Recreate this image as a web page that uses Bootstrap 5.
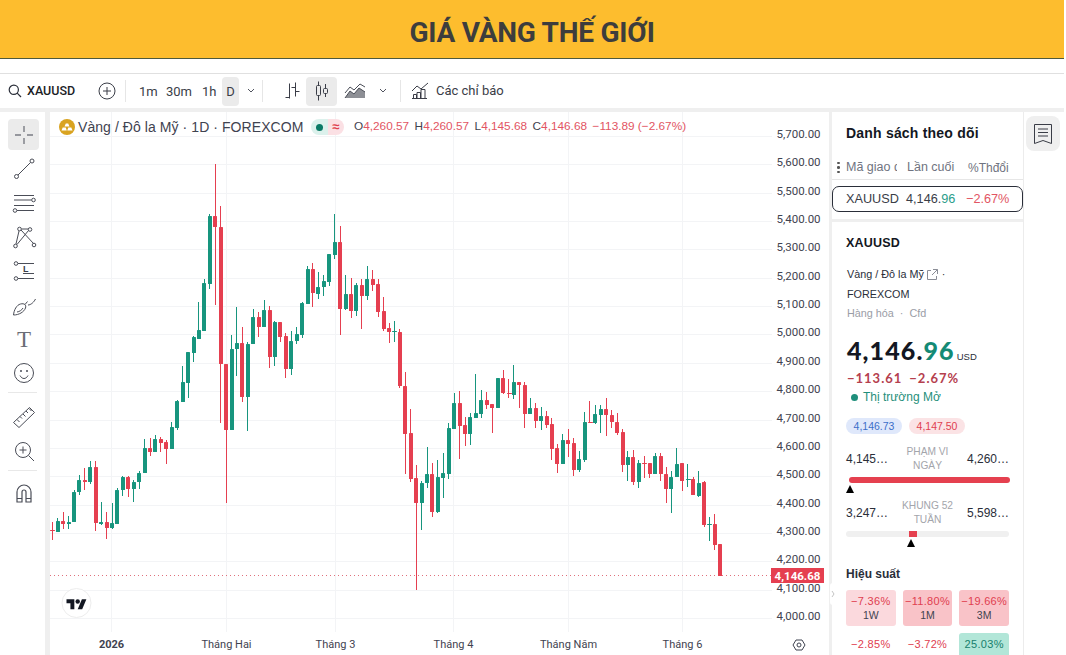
<!DOCTYPE html>
<html lang="vi">
<head>
    <meta charset="UTF-8">
    <meta name="viewport" content="width=device-width, initial-scale=1.0">
    <title>Giá vàng thế giới</title>
    <link href="https://cdn.jsdelivr.net/npm/bootstrap@5.3.0/dist/css/bootstrap.min.css" rel="stylesheet">
    <style>
        html, body { height: 655px; overflow: hidden; }
        body { background: #fff; font-family: "Liberation Sans", Arial, sans-serif; color: #2a2e39; }
        .page-wrap { width: 1064px; height: 655px; overflow: hidden; }

        .gold-head { height: 59px; background: #fdbd2e; border-bottom: 1px solid #4d5a3c; padding-top: 8px; }
        .gold-head h1 { font-family: Roboto, sans-serif; font-weight: 700; font-size: 28px; line-height: 50px; color: #3d3d3d; margin: 0; letter-spacing: -.25px; }

        .top-tools { margin-top: 14px; height: 35px; border-top: 1px solid #e0e0e0; font-family: Roboto, sans-serif; font-size: 13px; color: #3a3d47; }
        .top-tools svg { display: block; flex: none; }
        .symbol-name { font-weight: 500; color: #1c1e26; width: 48px; margin-left: 5px; font-size: 12.5px; white-space: nowrap; }
        .tool-sep { width: 1px; height: 22px; background: #e6e6e6; flex: none; }
        .range-btn { height: 29px; line-height: 29px; text-align: center; flex: none; border-radius: 4px; }
        .range-btn.on { background: #ebebeb; }

        .work-area { height: 547px; background: #efefef; padding-top: 4px; }
        .side-tools { width: 45px; background: #fff; padding: 7px 8px 0; flex: none; }
        .draw-btn { width: 31px; height: 31px; margin-bottom: 3px; border-radius: 4px; }
        .draw-btn.on { background: #ebebeb; }
        .draw-line { height: 1px; background: #e8e8e8; margin: 4px 0 8px; }

        .chart-box { width: 779px; margin-left: 5px; background: #fff; position: relative; flex: none; }
        .chart-box > svg { display: block; }
        .chart-legend { position: absolute; left: 9px; top: 7px; height: 16px; font-size: 14px; color: #3f4350; white-space: nowrap; }
        .legend-title { margin-left: 3px; width: 225px; letter-spacing: .07px; }
        .status-pill { width: 33px; height: 16px; margin-left: 8px; border-radius: 8px; overflow: hidden; }
        .status-pill span { width: 50%; height: 16px; }
        .pill-live { background: #dcf1ec; }
        .pill-live i { display: block; width: 7px; height: 7px; border-radius: 50%; background: #0b7a66; }
        .pill-delay { background: #fbe0e4; color: #e0404f; font-size: 13px; font-weight: 700; line-height: 15px; }
        .ohlc { margin-left: 10px; font-size: 11.8px; color: #e25563; }
        .ohlc b { font-weight: 400; color: #3f4350; }
        .ohlc span { margin-right: 5.5px; }

        .watch-side { width: 191px; margin-left: 3px; background: #fff; flex: none; }
        .watch-title { height: 42px; line-height: 42px; padding-left: 14px; font-size: 14px; font-weight: 700; color: #131722; letter-spacing: .2px; }
        .watch-cols { height: 26px; padding-top: 2px; border-bottom: 1px solid #e6e6e6; font-size: 12.5px; color: #6f7380; }
        .watch-dots { width: 14px; padding-left: 5px; flex: none; }
        .watch-dots i { display: block; width: 2.5px; height: 2.5px; border-radius: 50%; background: #555; margin: 2px 0; }
        .col-sym { width: 51px; overflow: hidden; white-space: nowrap; flex: none; }
        .col-last { width: 48px; margin-left: 10px; flex: none; white-space: nowrap; }
        .col-chg { margin-left: 13px; width: 40px; white-space: nowrap; flex: none; text-align: right; font-size: 12px; }
        .watch-row { margin-top: 6px; height: 26px; padding-top: 1px; border: 1px solid #2a2e39; border-radius: 7px; font-size: 12.7px; color: #3a3d47; padding-left: 13px; }
        .watch-row .col-sym, .watch-row .col-last { overflow: visible; }
        .watch-row .col-last { margin-left: 9px; }
        .watch-row .col-chg { margin-left: 12px; color: #e25563; font-size: 12.7px; }
        .txt-up { color: #2a9d8a; }
        .band-gap { height: 3px; background: #efefef; margin-top: 7px; }

        .detail-body { padding: 0 14px; }
        .detail-sym { margin-top: 11px; font-size: 12.5px; font-weight: 700; line-height: 20px; color: #131722; letter-spacing: .2px; }
        .detail-line { font-size: 10.8px; line-height: 20px; color: #2a2e39; padding-left: 1px; }
        .detail-line svg { margin: 0 4px 0 3px; vertical-align: -2px; }
        .detail-grey { font-size: 10.8px; line-height: 18px; color: #9a9da6; padding-left: 1px; }
        .big-price { margin-top: 10px; height: 36px; line-height: 36px; font-family: Lato, sans-serif; font-weight: 900; font-size: 25px; letter-spacing: 1.1px; color: #131722; white-space: nowrap; padding-left: 1px; overflow: hidden; }
        .big-price .cents { color: #148a75; }
        .big-price small { font-family: "Liberation Sans", sans-serif; font-weight: 400; font-size: 9.5px; letter-spacing: 0; margin-left: -5px; color: #2a2e39; }
        .big-change { margin-top: 1px; line-height: 18px; font-family: Lato, sans-serif; font-weight: 700; font-size: 13px; letter-spacing: 1px; color: #b5404e; padding-left: 1px; }
        .big-change span { margin-right: 7px; }
        .market-open { margin-top: 1px; line-height: 18px; font-size: 12px; color: #1f8f7b; padding-left: 5px; }
        .market-open i { display: inline-block; width: 7px; height: 7px; border-radius: 50%; background: #1f8f7b; margin-right: 5px; }
        .quote-row { margin-top: 12px; gap: 7px; }
        .quote-pill { height: 16px; line-height: 16px; border-radius: 8px; font-size: 10.5px; width: 56px; text-align: center; }
        .quote-blue { background: #dfe8fb; color: #3c6fc9; }
        .quote-red { background: #fbe3e5; color: #e0404f; }
        .range-head { font-size: 12px; line-height: 28px; height: 28px; color: #2a2e39; }
        .range-head.first { margin-top: 11px; }
        .range-num { width: 42px; flex: none; white-space: nowrap; }
        .range-name { flex: 1; padding: 0 8px; text-align: center; font-size: 10.2px; line-height: 14px; color: #a3a5ab; }
        .range-track { position: relative; height: 6px; border-radius: 3px; background: #f0f0f0; margin: 4px 0 16px; }
        .range-track.filled { background: #e5404f; margin-left: 3px; margin-right: -1px; }
        .range-mark { position: absolute; top: 8px; width: 0; height: 0; border-left: 4px solid transparent; border-right: 4px solid transparent; border-bottom: 8px solid #000; }
        .range-fill { position: absolute; top: 0; height: 6px; background: #e5404f; }
        .perf-title { margin-top: 28px; line-height: 18px; font-size: 12px; font-weight: 700; color: #2a2e39; }
        .perf-grid { margin-top: 7px; display: grid; grid-template-columns: repeat(3, 1fr); gap: 7px; }
        .perf-cell { height: 36px; border-radius: 3px; text-align: center; font-size: 11px; line-height: 14px; padding-top: 4px; color: #e0404f; letter-spacing: .3px; }
        .perf-cell small { display: block; font-size: 10.5px; color: #3f4350; letter-spacing: 0; }
        .perf-a { background: #fbd9dd; }
        .perf-b { background: #f9c3c8; }
        .perf-g { background: #b2e6d8; color: #16806c; }

        .book-strip { width: 41px; margin-left: 0; background: #fff; border-left: 1px solid #ececec; padding: 4px 0 0 2px; flex: none; }
        .book-btn { width: 34px; height: 35px; background: #efefef; border-radius: 8px; }

        .collapse-tab { position: absolute; left: 780px; top: 471px; width: 6px; height: 22px; background: #fff; border-radius: 3px; z-index: 3; color: #c4c4c4; }
    </style>
</head>
<body>
<div class="page-wrap">
    <!-- tieu de -->
    <div class="gold-head text-center"><h1>GIÁ VÀNG THẾ GIỚI</h1></div>

    <!-- thanh cong cu tren -->
    <div class="top-tools d-flex align-items-center">
        <svg class="ms-2" width="14" height="14" viewBox="0 0 14 14" fill="none" stroke="#2a2e39" stroke-width="1.2"><circle cx="5.8" cy="5.8" r="4.6"/><path d="M9.2 9.2L13 13"/></svg>
        <div class="symbol-name">XAUUSD</div>
        <svg style="margin-left:23px" width="18" height="18" viewBox="0 0 18 18" fill="none" stroke="#3a3d47" stroke-width="1"><circle cx="9" cy="9" r="8"/><path d="M9 5v8M5 9h8"/></svg>
        <div class="tool-sep" style="margin-left:9px"></div>
        <div class="range-btn" style="width:17px;margin-left:13px">1m</div>
        <div class="range-btn" style="width:25px;margin-left:10px">30m</div>
        <div class="range-btn" style="width:13px;margin-left:11px">1h</div>
        <div class="range-btn on" style="width:17px;margin-left:7px">D</div>
        <svg style="margin-left:8px" width="8" height="6" viewBox="0 0 8 6" fill="none" stroke="#50535e"><path d="M1 1l3 3 3-3"/></svg>
        <div class="tool-sep" style="margin-left:7px"></div>
        <svg style="margin-left:21px" width="16" height="18" viewBox="0 0 16 18" fill="none" stroke="#3a3d47"><path d="M5.5 1.5v15M1.5 15.5h4M11.5 0.5v14M7.5 5.5h4M11.5 9.5h4"/></svg>
        <div class="range-btn on d-flex align-items-center justify-content-center" style="width:31px;margin-left:6px">
            <svg width="16" height="20" viewBox="0 0 16 20" fill="none" stroke="#3a3d47"><path d="M4.5 0.5v3.500M4.5 15v4.500M11.5 3v4M11.5 13v3"/><rect x="2.5" y="4.5" width="4" height="10" rx="1"/><rect x="9.5" y="7.5" width="4" height="5" rx="1"/></svg>
        </div>
        <svg style="margin-left:7px" width="22" height="16" viewBox="0 0 22 16"><path d="M1 15l5-7 4 3 5-6 6 4v6z" fill="#8d8f95"/><path d="M1 10l5-6 4 3 6-6 5 3M1 15l5-7 4 3 5-6 6 4" fill="none" stroke="#4a4d57"/></svg>
        <svg style="margin-left:13px" width="8" height="6" viewBox="0 0 8 6" fill="none" stroke="#50535e"><path d="M1 1l3 3 3-3"/></svg>
        <div class="tool-sep" style="margin-left:13px"></div>
        <svg style="margin-left:10px" width="20" height="18" viewBox="0 0 20 18" fill="none" stroke="#3a3d47"><path d="M1 9l5-5 4 3 7-6"/><path d="M2.500 16.500v-4h3v4M6 16.500v-6h3.500v6M10 16.500v-9h4v9M1 16.500h15"/></svg>
        <div style="margin-left:5px" class="text-nowrap">Các chỉ báo</div>
    </div>

    <div class="work-area d-flex">
        <!-- cong cu ve -->
        <div class="side-tools">
            <div class="draw-btn on d-flex align-items-center justify-content-center"><svg width="26" height="26" viewBox="0 0 26 26" fill="none" stroke="#7a7c84" stroke-width="1.4"><path d="M13 4v6M13 16v6M4 13h6M16 13h6"/></svg></div>
            <div class="draw-btn d-flex align-items-center justify-content-center"><svg width="26" height="26" viewBox="0 0 26 26" fill="none" stroke="#4a4d57"><circle cx="5.500" cy="20.500" r="2"/><circle cx="21" cy="5" r="2"/><path d="M7 19L19.500 6.500"/></svg></div>
            <div class="draw-btn d-flex align-items-center justify-content-center"><svg width="26" height="26" viewBox="0 0 26 26" fill="none" stroke="#4a4d57"><path d="M3 5.500h20M3 10h17.500M3 15.500h20M6 20.500h17"/><circle cx="22.500" cy="10" r="1.800"/><circle cx="4" cy="20.500" r="1.800"/></svg></div>
            <div class="draw-btn d-flex align-items-center justify-content-center"><svg width="26" height="26" viewBox="0 0 26 26" fill="none" stroke="#4a4d57"><circle cx="4.500" cy="22" r="1.800"/><circle cx="8.500" cy="5" r="1.800"/><circle cx="19" cy="5.500" r="1.800"/><circle cx="23" cy="21" r="1.800"/><path d="M5 20L8 7M10 6L22.500 19.500M17.500 6.500L6 20.500M10.500 5h7"/></svg></div>
            <div class="draw-btn d-flex align-items-center justify-content-center"><svg width="26" height="26" viewBox="0 0 26 26" fill="none" stroke="#4a4d57"><circle cx="5" cy="5.500" r="1.800"/><path d="M7 5.500h16M12 15.500h11M7 20.500h16"/><circle cx="5" cy="20.500" r="1.800"/><text x="12" y="14" font-size="9" font-weight="700" font-family="Liberation Sans, sans-serif" fill="#3a3d47" stroke="none">L</text></svg></div>
            <div class="draw-btn d-flex align-items-center justify-content-center"><svg width="26" height="26" viewBox="0 0 26 26" fill="none" stroke="#4a4d57"><path d="M2.500 23c.5-5 3-10 7-11 4-1 6 1 5 4-1.500 4-6.500 7-12 7z"/><path d="M14 12.500l2.500-3M17 13c3 0 6-3 7.500-6M6 20c2.500-.5 4.500-1.500 6-4"/></svg></div>
            <div class="draw-btn d-flex align-items-center justify-content-center"><svg width="26" height="26" viewBox="0 0 26 26"><text x="13" y="21" text-anchor="middle" font-size="23" font-family="Liberation Serif, serif" fill="#6a6d76">T</text></svg></div>
            <div class="draw-btn d-flex align-items-center justify-content-center"><svg width="26" height="26" viewBox="0 0 26 26" fill="none" stroke="#4a4d57"><circle cx="13" cy="13" r="9.500"/><path d="M9 15.500c1 2 2.500 3 4 3s3-1 4-3"/><circle cx="10" cy="11" r="1" fill="#4a4d57" stroke="none"/><circle cx="16" cy="11" r="1" fill="#4a4d57" stroke="none"/></svg></div>
            <div class="draw-line"></div>
            <div class="draw-btn d-flex align-items-center justify-content-center"><svg width="26" height="26" viewBox="0 0 26 26" fill="none" stroke="#4a4d57"><path d="M2.500 18.500L18.500 3.500l5 5L8 23.500z"/><path d="M6 15.500l2.500 2.500M9 12.500l2 2M12 10l2.500 2.500M15 7l2 2M18 4.500l2.500 2.500"/></svg></div>
            <div class="draw-btn d-flex align-items-center justify-content-center"><svg width="26" height="26" viewBox="0 0 26 26" fill="none" stroke="#4a4d57"><circle cx="12" cy="12" r="7.500"/><path d="M12 8.500v7M8.500 12h7M17.500 17.500L23 23"/></svg></div>
            <div class="draw-line" style="margin:4px 0 6px"></div>
            <div class="draw-btn d-flex align-items-center justify-content-center"><svg width="26" height="26" viewBox="0 0 26 26" fill="none" stroke="#4a4d57" stroke-width="1.2"><path d="M6 22V12a7 7 0 0 1 14 0v10h-5V12a2 2 0 0 0-4 0v10z"/><path d="M6 18.500h5M15 18.500h5"/></svg></div>
        </div>

        <!-- bieu do -->
        <div class="chart-box">
            <svg id="chartSvg" width="779" height="543" viewBox="50 112 779 543"></svg>
            <div class="chart-legend d-flex align-items-center">
                <svg width="16" height="16" viewBox="0 0 16 16"><circle cx="8" cy="8" r="8" fill="#d9a320"/><path d="M5.500 7.500L6.800 4.500h2.400l1.300 3zM2.500 11.500l1.200-3h3l1 3zM8.300 11.500l1-3h3l1.200 3z" fill="#fff"/></svg>
                <div class="legend-title">Vàng / Đô la Mỹ · 1D · FOREXCOM</div>
                <div class="status-pill d-flex">
                    <span class="pill-live d-flex align-items-center justify-content-center"><i></i></span>
                    <span class="pill-delay text-center">≈</span>
                </div>
                <div class="ohlc"><span><b>O</b>4,260.57</span><span><b>H</b>4,260.57</span><span><b>L</b>4,145.68</span><span><b>C</b>4,146.68</span><span>−113.89 (−2.67%)</span></div>
            </div>
            <div class="collapse-tab d-flex align-items-center justify-content-center"><svg width="4" height="8" viewBox="0 0 4 8" fill="none" stroke="#c4c4c4"><path d="M1 1l2 3-2 3"/></svg></div>
        </div>

        <!-- danh sach theo doi -->
        <div class="watch-side">
            <div class="watch-title">Danh sách theo dõi</div>
            <div class="watch-cols d-flex align-items-center">
                <div class="watch-dots"><i></i><i></i><i></i></div>
                <div class="col-sym">Mã giao d</div>
                <div class="col-last">Lần cuối</div>
                <div class="col-chg">%Thđổi</div>
            </div>
            <div class="watch-row d-flex align-items-center">
                <div class="col-sym">XAUUSD</div>
                <div class="col-last">4,146.<span class="txt-up">96</span></div>
                <div class="col-chg">−2.67%</div>
            </div>
            <div class="band-gap"></div>
            <div class="detail-body">
                <div class="detail-sym">XAUUSD</div>
                <div class="detail-line" style="margin-top:11px">Vàng / Đô la Mỹ<svg width="11" height="11" viewBox="0 0 11 11" fill="none" stroke="#8a8d96"><path d="M4 1.500H.5v9h9V7M6 .5h4.500V5M10.500.5L5 6"/></svg>·</div>
                <div class="detail-line">FOREXCOM</div>
                <div class="detail-grey">Hàng hóa&nbsp; ·&nbsp; Cfd</div>
                <div class="big-price">4,146.<span class="cents">96</span> <small>USD</small></div>
                <div class="big-change"><span>−113.61</span>−2.67%</div>
                <div class="market-open"><i></i>Thị trường Mở</div>
                <div class="quote-row d-flex">
                    <div class="quote-pill quote-blue">4,146.73</div>
                    <div class="quote-pill quote-red">4,147.50</div>
                </div>
                <div class="range-head first d-flex">
                    <div class="range-num">4,145…</div>
                    <div class="range-name">PHẠM VI NGÀY</div>
                    <div class="range-num text-end pe-1">4,260…</div>
                </div>
                <div class="range-track filled"><div class="range-mark" style="left:-3px"></div></div>
                <div class="range-head d-flex">
                    <div class="range-num">3,247…</div>
                    <div class="range-name">KHUNG 52 TUẦN</div>
                    <div class="range-num text-end">5,598…</div>
                </div>
                <div class="range-track">
                    <div class="range-fill" style="left:63px;width:8px"></div>
                    <div class="range-mark" style="left:61px"></div>
                </div>
                <div class="perf-title">Hiệu suất</div>
                <div class="perf-grid">
                    <div class="perf-cell perf-a">−7.36%<small>1W</small></div>
                    <div class="perf-cell perf-b">−11.80%<small>1M</small></div>
                    <div class="perf-cell perf-b">−19.66%<small>3M</small></div>
                    <div class="perf-cell">−2.85%</div>
                    <div class="perf-cell">−3.72%</div>
                    <div class="perf-cell perf-g">25.03%</div>
                </div>
            </div>
        </div>

        <div class="book-strip">
            <div class="book-btn d-flex align-items-center justify-content-center">
                <svg width="20" height="22" viewBox="0 0 20 22" fill="none" stroke="#3a3d47"><path d="M1.500 1.500h17v19l-8.500-3-8.500 3z"/><path d="M5 6h10M5 9.500h10M5 13h10"/></svg>
            </div>
        </div>
    </div>
</div>

<script>
    // moi nen: loai, dinh than, day than, dinh bong, day bong (toa do pixel cua anh)
    const candles = [
        'r 530 531 522 540','g 521 532 518 532','r 521 524 512 529','g 522 524 516 529','g 492 522 490 522','g 480 492 475 495',
        'r 480 482 468 490','g 467 482 461 484','r 467 523 461 531','g 522 524 502 525','r 522 528 512 539','g 523 528 503 529',
        'g 490 524 488 524','g 477 490 476 496','r 477 489 476 497','g 482 489 480 502','g 473 482 471 489','g 448 473 439 473',
        'r 448 452 438 456','g 439 452 435 452','r 439 443 437 452','r 442 449 440 464','g 427 449 422 449','g 401 428 400 430',
        'g 382 402 366 402','g 352 383 352 398','g 337 353 336 362','g 330 339 302 339','g 283 331 279 331','g 216 284 214 289',
        'r 216 227 164 305','r 227 364 206 423','r 364 430 364 503','g 349 430 335 430','g 343 349 307 376','r 343 397 327 402',
        'g 344 397 342 431','g 317 344 309 344','r 317 327 312 337','g 310 327 300 327','r 310 357 306 368','g 322 357 321 366',
        'r 322 337 322 342','r 336 369 333 378','g 341 369 331 375','g 334 341 327 344','g 303 335 302 338','g 269 304 266 304',
        'r 269 293 263 307','g 287 294 272 299','g 281 287 275 296','g 254 282 254 286','g 242 255 214 259','r 242 309 226 335',
        'g 294 309 275 310','r 294 311 278 318','g 285 311 283 316','r 285 296 279 329','g 279 296 266 300','r 279 285 270 291',
        'r 284 312 279 317','r 311 329 297 331','r 328 332 323 343','g 331 332 321 342','r 332 386 329 388','r 386 434 372 474',
        'r 433 479 409 482','r 478 503 465 590','g 483 503 481 530','g 474 483 447 488','r 474 512 463 517','g 477 512 460 513',
        'g 473 478 453 498','g 428 474 423 479','g 403 429 393 429','r 403 426 391 459','r 425 434 417 446','g 417 434 413 445',
        'g 413 418 374 418','g 400 414 390 418','r 400 405 392 409','r 404 408 404 433','g 378 408 378 408','r 378 393 370 394',
        'r 393 394 379 398','g 382 395 365 399','r 382 385 382 408','r 385 414 382 428','g 408 414 398 414','r 408 421 403 428',
        'g 416 421 407 430','r 416 425 411 428','r 424 449 418 460','r 448 464 444 473','g 440 464 434 464','r 440 444 429 457',
        'r 443 470 438 476','g 459 470 451 472','g 422 460 412 462','r 422 423 401 423','g 414 423 405 424','g 409 415 405 433',
        'r 409 415 398 436','r 415 422 410 428','r 422 433 413 435','r 432 465 429 472','g 457 465 451 481','r 457 482 450 485',
        'g 463 482 460 488','r 463 464 456 478','r 463 474 463 478','g 456 474 453 474','r 456 474 453 481','r 474 489 467 503',
        'g 477 489 471 513','g 464 477 448 477','r 463 481 463 491','g 479 480 464 487','r 479 495 477 495','g 483 496 471 497',
        'r 482 525 481 527','g 524 525 517 541','r 524 545 514 550','r 544 576 544 576'
    ];
    const priceLabels = ['5,700.00','5,600.00','5,500.00','5,400.00','5,300.00','5,200.00','5,100.00','5,000.00','4,900.00','4,800.00','4,700.00','4,600.00','4,500.00','4,400.00','4,300.00','4,200.00','4,100.00','4,000.00'];
    const timeLabels = [[111,'2026',700],[226,'Tháng Hai',400],[335,'Tháng 3',400],[453,'Tháng 4',400],[568,'Tháng Năm',400],[682,'Tháng 6',400]];
    const colors = { g: '#17957e', r: '#e53f50' };
    let out = '';

    // luoi
    priceLabels.forEach((p, i) => {
        const y = 136 + i * 28.35;
        out += `<rect x="50" y="${Math.round(y)}" width="722" height="1" fill="#f3f4f6"/>`;
    });
    timeLabels.forEach(t => { out += `<rect x="${t[0]}" y="112" width="1" height="520" fill="#f3f4f6"/>`; });

    // duong gia hien tai
    out += '<line x1="50" y1="575.500" x2="771" y2="575.500" stroke="#e0707c" stroke-width="1" stroke-dasharray="1 3"/>';

    // nen
    candles.forEach((c, i) => {
        const [k, top, bot, hi, lo] = c.split(' ');
        const cx = 52.3 + i * 5.431;
        const h = Math.max(+bot - +top, 1);
        out += `<rect x="${Math.round(cx - 0.5)}" y="${hi}" width="1" height="${+lo - +hi}" fill="${colors[k]}"/>`;
        out += `<rect x="${Math.round(cx - 2)}" y="${top}" width="${h > 1 ? 4 : 5}" height="${h}" rx="0.5" fill="${colors[k]}"/>`;
    });

    // truc gia, truc thoi gian
    priceLabels.forEach((p, i) => {
        out += `<text x="776.500" y="${134 + i * 28.35 + 4}" font-size="11.500" font-family="Roboto, sans-serif" fill="#3f4350">${p}</text>`;
    });
    timeLabels.forEach(t => {
        out += `<text x="${t[0] + .5}" y="648" text-anchor="middle" font-size="11" font-weight="${t[2]}" font-family="Roboto, sans-serif" fill="#3f4350">${t[1]}</text>`;
    });

    // nhan gia
    out += '<rect x="771" y="568" width="53" height="15" fill="#e53f50"/>';
    out += '<text x="797.500" y="579.500" text-anchor="middle" font-size="11.500" font-weight="700" font-family="Roboto, sans-serif" fill="#fff">4,146.68</text>';

    // logo TV va nut cai dat
    out += '<circle cx="76.500" cy="603" r="14.500" fill="#fff" stroke="#ededed"/>';
    out += '<g transform="translate(66.500 597) scale(.56)" fill="#131722"><path d="M14 22H7V11H0V4h14v18zM28 22h-8l7.500-18h8L28 22z"/><circle cx="20" cy="8" r="4"/></g>';
    out += '<path d="M796 640h6l3 5-3 5h-6l-3-5z" fill="none" stroke="#3f4350" stroke-linejoin="round"/><circle cx="799" cy="645" r="2" fill="none" stroke="#3f4350"/>';

    document.getElementById('chartSvg').innerHTML = out;
</script>
<script src="https://cdn.jsdelivr.net/npm/bootstrap@5.3.0/dist/js/bootstrap.bundle.min.js"></script>
</body>
</html>
